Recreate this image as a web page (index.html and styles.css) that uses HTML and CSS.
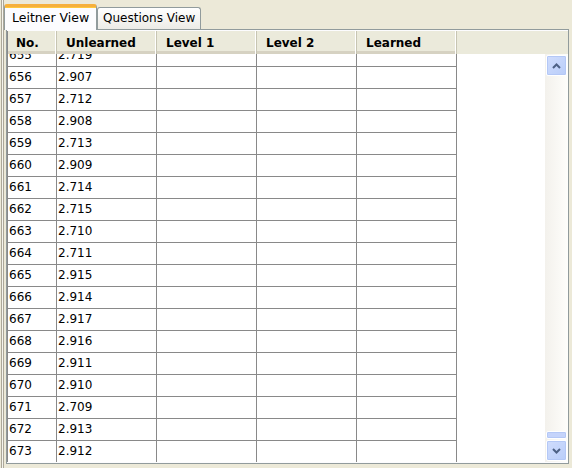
FILE: index.html
```html
<!DOCTYPE html>
<html>
<head>
<meta charset="utf-8">
<link rel="stylesheet" href="styles.css">
</head>
<body>
<div class="window">
  <div class="splitter"></div>
  <div class="main">
    <div class="tabs">
      <div class="tab active">Leitner View</div>
      <div class="tab">Questions View</div>
    </div>
    <div class="panel">
      <div class="thead">
        <div class="th c-no">No.</div>
        <div class="th">Unlearned</div>
        <div class="th">Level 1</div>
        <div class="th">Level 2</div>
        <div class="th">Learned</div>
        <div class="th-fill"></div>
      </div>
      <div class="tbody">
        <div class="viewport">
          <div class="rows">
            <div class="row"><div class="td c-no">655</div><div class="td">2.719</div><div class="td"></div><div class="td"></div><div class="td"></div></div>
            <div class="row"><div class="td c-no">656</div><div class="td">2.907</div><div class="td"></div><div class="td"></div><div class="td"></div></div>
            <div class="row"><div class="td c-no">657</div><div class="td">2.712</div><div class="td"></div><div class="td"></div><div class="td"></div></div>
            <div class="row"><div class="td c-no">658</div><div class="td">2.908</div><div class="td"></div><div class="td"></div><div class="td"></div></div>
            <div class="row"><div class="td c-no">659</div><div class="td">2.713</div><div class="td"></div><div class="td"></div><div class="td"></div></div>
            <div class="row"><div class="td c-no">660</div><div class="td">2.909</div><div class="td"></div><div class="td"></div><div class="td"></div></div>
            <div class="row"><div class="td c-no">661</div><div class="td">2.714</div><div class="td"></div><div class="td"></div><div class="td"></div></div>
            <div class="row"><div class="td c-no">662</div><div class="td">2.715</div><div class="td"></div><div class="td"></div><div class="td"></div></div>
            <div class="row"><div class="td c-no">663</div><div class="td">2.710</div><div class="td"></div><div class="td"></div><div class="td"></div></div>
            <div class="row"><div class="td c-no">664</div><div class="td">2.711</div><div class="td"></div><div class="td"></div><div class="td"></div></div>
            <div class="row"><div class="td c-no">665</div><div class="td">2.915</div><div class="td"></div><div class="td"></div><div class="td"></div></div>
            <div class="row"><div class="td c-no">666</div><div class="td">2.914</div><div class="td"></div><div class="td"></div><div class="td"></div></div>
            <div class="row"><div class="td c-no">667</div><div class="td">2.917</div><div class="td"></div><div class="td"></div><div class="td"></div></div>
            <div class="row"><div class="td c-no">668</div><div class="td">2.916</div><div class="td"></div><div class="td"></div><div class="td"></div></div>
            <div class="row"><div class="td c-no">669</div><div class="td">2.911</div><div class="td"></div><div class="td"></div><div class="td"></div></div>
            <div class="row"><div class="td c-no">670</div><div class="td">2.910</div><div class="td"></div><div class="td"></div><div class="td"></div></div>
            <div class="row"><div class="td c-no">671</div><div class="td">2.709</div><div class="td"></div><div class="td"></div><div class="td"></div></div>
            <div class="row"><div class="td c-no">672</div><div class="td">2.913</div><div class="td"></div><div class="td"></div><div class="td"></div></div>
            <div class="row"><div class="td c-no">673</div><div class="td">2.912</div><div class="td"></div><div class="td"></div><div class="td"></div></div>
          </div>
        </div>
        <div class="scrollbar">
          <div class="sb-btn">
            <svg width="9" height="6" viewBox="0 0 9 6"><path d="M1 5 L4.5 1.5 L8 5" fill="none" stroke="#4D6185" stroke-width="2"/></svg>
          </div>
          <div class="sb-track"></div>
          <div class="sb-thumb"></div>
          <div class="sb-btn">
            <svg width="9" height="6" viewBox="0 0 9 6"><path d="M1 1 L4.5 4.5 L8 1" fill="none" stroke="#4D6185" stroke-width="2"/></svg>
          </div>
        </div>
      </div>
    </div>
  </div>
</div>
</body>
</html>
```

FILE: styles.css
```css
html, body {
  margin: 0;
  padding: 0;
}
body {
  background: #ECE9D8;
  font-family: "DejaVu Sans", Verdana, sans-serif;
  font-size: 11px;
  color: #000;
  width: 572px;
  height: 468px;
  overflow: hidden;
}
.window {
  display: flex;
  height: 468px;
}
.splitter {
  width: 1px;
  margin-left: 1px;
  border-left: 1px solid #ACA899;
  border-right: 1px solid #ACA899;
  background: #F5F4EE;
  height: 468px;
  flex: none;
}
.main {
  display: flex;
  flex-direction: column;
  flex: 1;
}
.tabs {
  box-sizing: border-box;
  display: flex;
  align-items: flex-end;
  height: 29px;
  padding-top: 4px;
  position: relative;
  z-index: 1;
}
.tab {
  box-sizing: border-box;
  height: 22px;
  padding: 0 5px;
  line-height: 21px;
  font-size: 12px;
  border: 1px solid #919B9C;
  border-bottom: none;
  border-radius: 3px 3px 0 0;
  background: linear-gradient(#FFFFFF, #ECEBE6);
}
.tab.active {
  height: 26px;
  width: 93px;
  padding: 0 0 0 7px;
  line-height: 22px;
  font-size: 12.5px;
  border-top: 3px solid #F6B03C;
  border-radius: 3px 3px 0 0;
  background: #FCFCFE;
  margin-bottom: -1px;
  box-shadow: inset 0 1px 0 #FFC83C;
}
.panel {
  box-sizing: border-box;
  margin-left: 2px;
  width: 563px;
  height: 435px;
  border: 1px solid #919B9C;
  background: #FCFCFE;
  padding: 1px 0 1px 0;
  display: flex;
  flex-direction: column;
}
.thead {
  display: flex;
  height: 23px;
  background: #EBEADB;
  border-left: 1px solid #898989;
  box-sizing: border-box;
  flex: none;
}
.th {
  box-sizing: border-box;
  width: 100px;
  height: 23px;
  font-weight: bold;
  font-size: 12px;
  line-height: 24px;
  padding-left: 9px;
  border-right: 1px solid #C7C5B2;
  box-shadow: inset -1px 0 0 #FFFFFF, inset 0 -3px 0 #D6D2C2;
}
.th.c-no {
  width: 49px;
  padding-left: 8px;
}
.th-fill {
  flex: 1;
}
.tbody {
  display: flex;
  flex: 1;
  min-height: 0;
}
.viewport {
  flex: 1;
  overflow: hidden;
  background: #FFFFFF;
  border-left: 1px solid #898989;
}
.rows {
  margin-top: -9px;
}
.row {
  display: flex;
  height: 22px;
}
.td {
  box-sizing: border-box;
  width: 100px;
  height: 22px;
  line-height: 21px;
  padding-left: 1px;
  font-size: 12px;
  border-right: 1px solid #898989;
  border-bottom: 1px solid #898989;
}
.td.c-no {
  width: 49px;
}
.scrollbar {
  width: 23px;
  display: flex;
  flex-direction: column;
  background: linear-gradient(90deg, #F3F1EC, #FEFEFB);
  padding: 1px;
  box-sizing: border-box;
}
.sb-btn {
  box-sizing: border-box;
  height: 21px;
  border: 1px solid #FFFFFF;
  border-radius: 2px;
  background: linear-gradient(135deg, #D0DDFD, #B9CDF9);
  box-shadow: inset 0 0 0 1px #B4C8F6;
  display: flex;
  align-items: center;
  justify-content: center;
  flex: none;
}
.sb-track {
  flex: 1;
}
.sb-thumb {
  box-sizing: border-box;
  height: 8px;
  margin-bottom: 1px;
  border: 1px solid #FFFFFF;
  border-radius: 2px;
  background: #C5D4FB;
  box-shadow: inset 0 0 0 1px #B4C8F6;
  flex: none;
}
```
